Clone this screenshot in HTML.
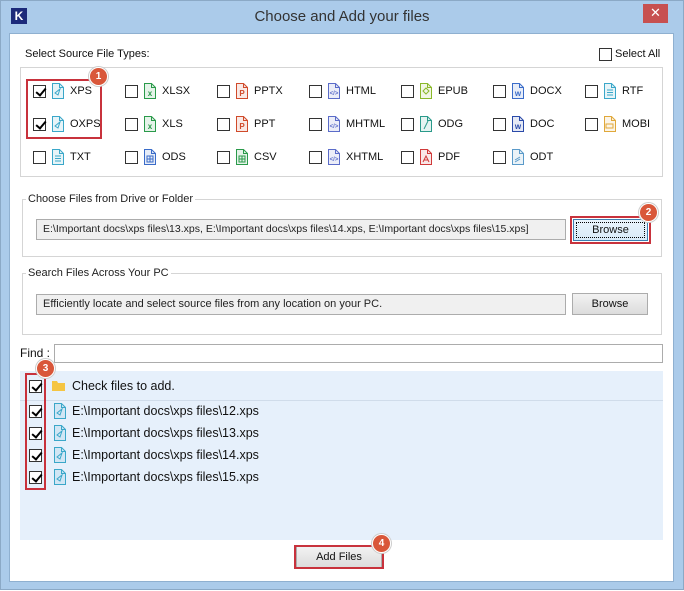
<!DOCTYPE html>
<html><head><meta charset="utf-8"><style>
*{margin:0;padding:0;box-sizing:border-box}
body{width:684px;height:591px;background:#fff;position:relative;overflow:hidden;font-family:"Liberation Sans",sans-serif;font-size:11px;color:#111}
.a{position:absolute}
.frame{left:0;top:0;width:684px;height:590px;background:#abcbea;border:1px solid #8ba9c6}
.content{left:9px;top:33px;width:665px;height:549px;background:#fff;border:1px solid #8fb0d0}
.cb{position:absolute;width:13px;height:13px;border:1px solid #333;background:#fff}
.cb.on::after{content:"";position:absolute;left:3.5px;top:0px;width:4px;height:8px;border:solid #000;border-width:0 2px 2px 0;transform:rotate(40deg)}
.lbl{position:absolute;white-space:nowrap}
.grp{position:absolute;border:1px solid #d5d5d5}
.leg{position:absolute;background:#fff;padding:0 2px;white-space:nowrap;color:#222}
.tb{position:absolute;height:21px;background:#f0f0f0;border:1px solid #acacac;padding:3px 6px;white-space:nowrap;overflow:hidden;color:#222}
.btn{position:absolute;height:22px;background:linear-gradient(#f2f2f2,#dcdcdc);border:1px solid #acacac;text-align:center;line-height:20px;color:#111}
.red{position:absolute;border:2px solid #c8323c}
.badge{position:absolute;width:19px;height:19px;border-radius:50%;background:#d9573a;color:#fff;font-weight:bold;font-size:10px;text-align:center;line-height:17px;border:1px solid #fff;box-shadow:0 0 0 1px #ccc}
.fl{font-size:12.5px}
</style></head><body>
<div class="a frame"></div>
<div class="a" style="left:11px;top:8px;width:16px;height:16px;background:#1c2a7a;color:#fff;font-weight:bold;font-size:12px;line-height:16px;text-align:center">K</div>
<div class="a" style="left:0;width:684px;top:8px;text-align:center;font-size:15px;color:#333">Choose and Add your files</div>
<div class="a" style="left:643px;top:4px;width:25px;height:19px;background:#c75050;color:#fff;text-align:center;line-height:18px;font-size:13px">✕</div>
<div class="a content"></div>

<div class="lbl" style="left:25px;top:48px">Select Source File Types:</div>
<div class="cb" style="left:599px;top:48px"></div>
<div class="lbl" style="left:615px;top:48px">Select All</div>
<div class="grp" style="left:20px;top:67px;width:643px;height:110px"></div>

<div class="a" style="left:20px;top:371px;width:643px;height:169px;background:#e6f0fb"></div>
<div class="a" style="left:20px;top:400px;width:643px;height:1px;background:#d0dcea"></div>

<svg class="a" style="left:0;top:0" width="684" height="591">
<defs>
<g id="f"><path d="M0.5 0.5h7l4 4v11h-11z" fill="currentColor" fill-opacity="0.12" stroke="currentColor"/><path d="M7.5 0.5v4h4" fill="none" stroke="currentColor"/></g>
</defs>
<g font-family="Liberation Sans" font-size="8" font-weight="bold" text-anchor="middle">
<g color="#3aa7c9"><use href="#f" x="52" y="83"/><path d="M55 93l5-4-2 6z" fill="none" stroke="#3aa7c9"/></g>
<g color="#2a9a4a"><use href="#f" x="144" y="83"/><text x="150" y="96" fill="#2a9a4a">x</text></g>
<g color="#d04a2a"><use href="#f" x="236" y="83"/><text x="242" y="96" fill="#d04a2a">P</text></g>
<g color="#5b6cc9"><use href="#f" x="328" y="83"/><text x="334" y="95" font-size="6" fill="#5b6cc9">&lt;/&gt;</text></g>
<g color="#8ab82a"><use href="#f" x="420" y="83"/><path d="M426 88l3 3-3 3-3-3z" fill="none" stroke="#8ab82a"/></g>
<g color="#3a6cc9"><use href="#f" x="512" y="83"/><text x="518" y="96" fill="#3a6cc9">w</text></g>
<g color="#3aa7c9"><use href="#f" x="604" y="83"/><path d="M607 90h6M607 92.5h6M607 95h6" stroke="#3aa7c9"/></g>
<g color="#3aa7c9"><use href="#f" x="52" y="116"/><path d="M55 126l5-4-2 6z" fill="none" stroke="#3aa7c9"/></g>
<g color="#2a9a4a"><use href="#f" x="144" y="116"/><text x="150" y="129" fill="#2a9a4a">x</text></g>
<g color="#d04a2a"><use href="#f" x="236" y="116"/><text x="242" y="129" fill="#d04a2a">P</text></g>
<g color="#5b6cc9"><use href="#f" x="328" y="116"/><text x="334" y="128" font-size="6" fill="#5b6cc9">&lt;/&gt;</text></g>
<g color="#2a9a8a"><use href="#f" x="420" y="116"/><path d="M424 129l4-8" stroke="#2a9a8a"/></g>
<g color="#2a4aa9"><use href="#f" x="512" y="116"/><text x="518" y="129" fill="#2a4aa9">w</text></g>
<g color="#e0a83a"><use href="#f" x="604" y="116"/><path d="M606 124h7v4h-7z" fill="none" stroke="#e0a83a"/></g>
<g color="#3aa7c9"><use href="#f" x="52" y="149"/><path d="M55 156h6M55 158.5h6M55 161h6" stroke="#3aa7c9"/></g>
<g color="#3a6cc9"><use href="#f" x="144" y="149"/><path d="M147 156h6v6h-6zM147 159h6M150 156v6" fill="none" stroke="#3a6cc9"/></g>
<g color="#2a9a4a"><use href="#f" x="236" y="149"/><path d="M239 156h6v6h-6zM239 159h6M242 156v6" fill="none" stroke="#2a9a4a"/></g>
<g color="#5b6cc9"><use href="#f" x="328" y="149"/><text x="334" y="161" font-size="6" fill="#5b6cc9">&lt;/&gt;</text></g>
<g color="#d03a3a"><use href="#f" x="420" y="149"/><path d="M423 162l3-6 3 6M424 160h4" fill="none" stroke="#d03a3a"/></g>
<g color="#5a9ac9"><use href="#f" x="512" y="149"/><path d="M515 160l5-3M515 162l5-3" stroke="#5a9ac9"/></g>
<g color="#3aa7c9"><use href="#f" x="54" y="403"/><path d="M57 413l5-4-2 6z" fill="none" stroke="#3aa7c9"/></g>
<g color="#3aa7c9"><use href="#f" x="54" y="425"/><path d="M57 435l5-4-2 6z" fill="none" stroke="#3aa7c9"/></g>
<g color="#3aa7c9"><use href="#f" x="54" y="447"/><path d="M57 457l5-4-2 6z" fill="none" stroke="#3aa7c9"/></g>
<g color="#3aa7c9"><use href="#f" x="54" y="469"/><path d="M57 479l5-4-2 6z" fill="none" stroke="#3aa7c9"/></g>
<path d="M52 381h5l1 2h7v8h-13z" fill="#f5c542"/>
</g>
</svg>

<div class="cb on" style="left:33px;top:85px"></div><div class="lbl" style="left:70px;top:85px">XPS</div>
<div class="cb" style="left:125px;top:85px"></div><div class="lbl" style="left:162px;top:85px">XLSX</div>
<div class="cb" style="left:217px;top:85px"></div><div class="lbl" style="left:254px;top:85px">PPTX</div>
<div class="cb" style="left:309px;top:85px"></div><div class="lbl" style="left:346px;top:85px">HTML</div>
<div class="cb" style="left:401px;top:85px"></div><div class="lbl" style="left:438px;top:85px">EPUB</div>
<div class="cb" style="left:493px;top:85px"></div><div class="lbl" style="left:530px;top:85px">DOCX</div>
<div class="cb" style="left:585px;top:85px"></div><div class="lbl" style="left:622px;top:85px">RTF</div>

<div class="cb on" style="left:33px;top:118px"></div><div class="lbl" style="left:70px;top:118px">OXPS</div>
<div class="cb" style="left:125px;top:118px"></div><div class="lbl" style="left:162px;top:118px">XLS</div>
<div class="cb" style="left:217px;top:118px"></div><div class="lbl" style="left:254px;top:118px">PPT</div>
<div class="cb" style="left:309px;top:118px"></div><div class="lbl" style="left:346px;top:118px">MHTML</div>
<div class="cb" style="left:401px;top:118px"></div><div class="lbl" style="left:438px;top:118px">ODG</div>
<div class="cb" style="left:493px;top:118px"></div><div class="lbl" style="left:530px;top:118px">DOC</div>
<div class="cb" style="left:585px;top:118px"></div><div class="lbl" style="left:622px;top:118px">MOBI</div>

<div class="cb" style="left:33px;top:151px"></div><div class="lbl" style="left:70px;top:151px">TXT</div>
<div class="cb" style="left:125px;top:151px"></div><div class="lbl" style="left:162px;top:151px">ODS</div>
<div class="cb" style="left:217px;top:151px"></div><div class="lbl" style="left:254px;top:151px">CSV</div>
<div class="cb" style="left:309px;top:151px"></div><div class="lbl" style="left:346px;top:151px">XHTML</div>
<div class="cb" style="left:401px;top:151px"></div><div class="lbl" style="left:438px;top:151px">PDF</div>
<div class="cb" style="left:493px;top:151px"></div><div class="lbl" style="left:530px;top:151px">ODT</div>

<div class="red" style="left:26px;top:79px;width:76px;height:60px"></div>
<div class="badge" style="left:89px;top:67px">1</div>

<div class="grp" style="left:22px;top:199px;width:640px;height:58px"></div>
<div class="leg" style="left:26px;top:193px">Choose Files from Drive or Folder</div>
<div class="tb" style="left:36px;top:219px;width:530px;font-size:10.5px">E:\Important docs\xps files\13.xps, E:\Important docs\xps files\14.xps, E:\Important docs\xps files\15.xps]</div>
<div class="btn" style="left:573px;top:219px;width:75px;background:linear-gradient(#eaf4fc,#d8eaf8);border-color:#3c7fb1;outline:1px dotted #000;outline-offset:-4px">Browse</div>
<div class="red" style="left:570px;top:216px;width:81px;height:28px"></div>
<div class="badge" style="left:639px;top:203px">2</div>

<div class="grp" style="left:22px;top:273px;width:640px;height:62px"></div>
<div class="leg" style="left:26px;top:267px">Search Files Across Your PC</div>
<div class="tb" style="left:36px;top:294px;width:530px">Efficiently locate and select source files from any location on your PC.</div>
<div class="btn" style="left:572px;top:293px;width:76px">Browse</div>

<div class="lbl" style="left:20px;top:346px;font-size:12px">Find :</div>
<div class="a" style="left:54px;top:344px;width:609px;height:19px;border:1px solid #acacac"></div>

<div class="cb on" style="left:29px;top:380px"></div><div class="lbl fl" style="left:72px;top:379px">Check files to add.</div>
<div class="cb on" style="left:29px;top:405px"></div><div class="lbl fl" style="left:72px;top:404px">E:\Important docs\xps files\12.xps</div>
<div class="cb on" style="left:29px;top:427px"></div><div class="lbl fl" style="left:72px;top:426px">E:\Important docs\xps files\13.xps</div>
<div class="cb on" style="left:29px;top:449px"></div><div class="lbl fl" style="left:72px;top:448px">E:\Important docs\xps files\14.xps</div>
<div class="cb on" style="left:29px;top:471px"></div><div class="lbl fl" style="left:72px;top:470px">E:\Important docs\xps files\15.xps</div>
<div class="red" style="left:25px;top:373px;width:21px;height:117px"></div>
<div class="badge" style="left:36px;top:359px">3</div>

<div class="btn" style="left:296px;top:546px;width:86px">Add Files</div>
<div class="red" style="left:294px;top:545px;width:90px;height:24px"></div>
<div class="badge" style="left:372px;top:534px">4</div>
</body></html>
